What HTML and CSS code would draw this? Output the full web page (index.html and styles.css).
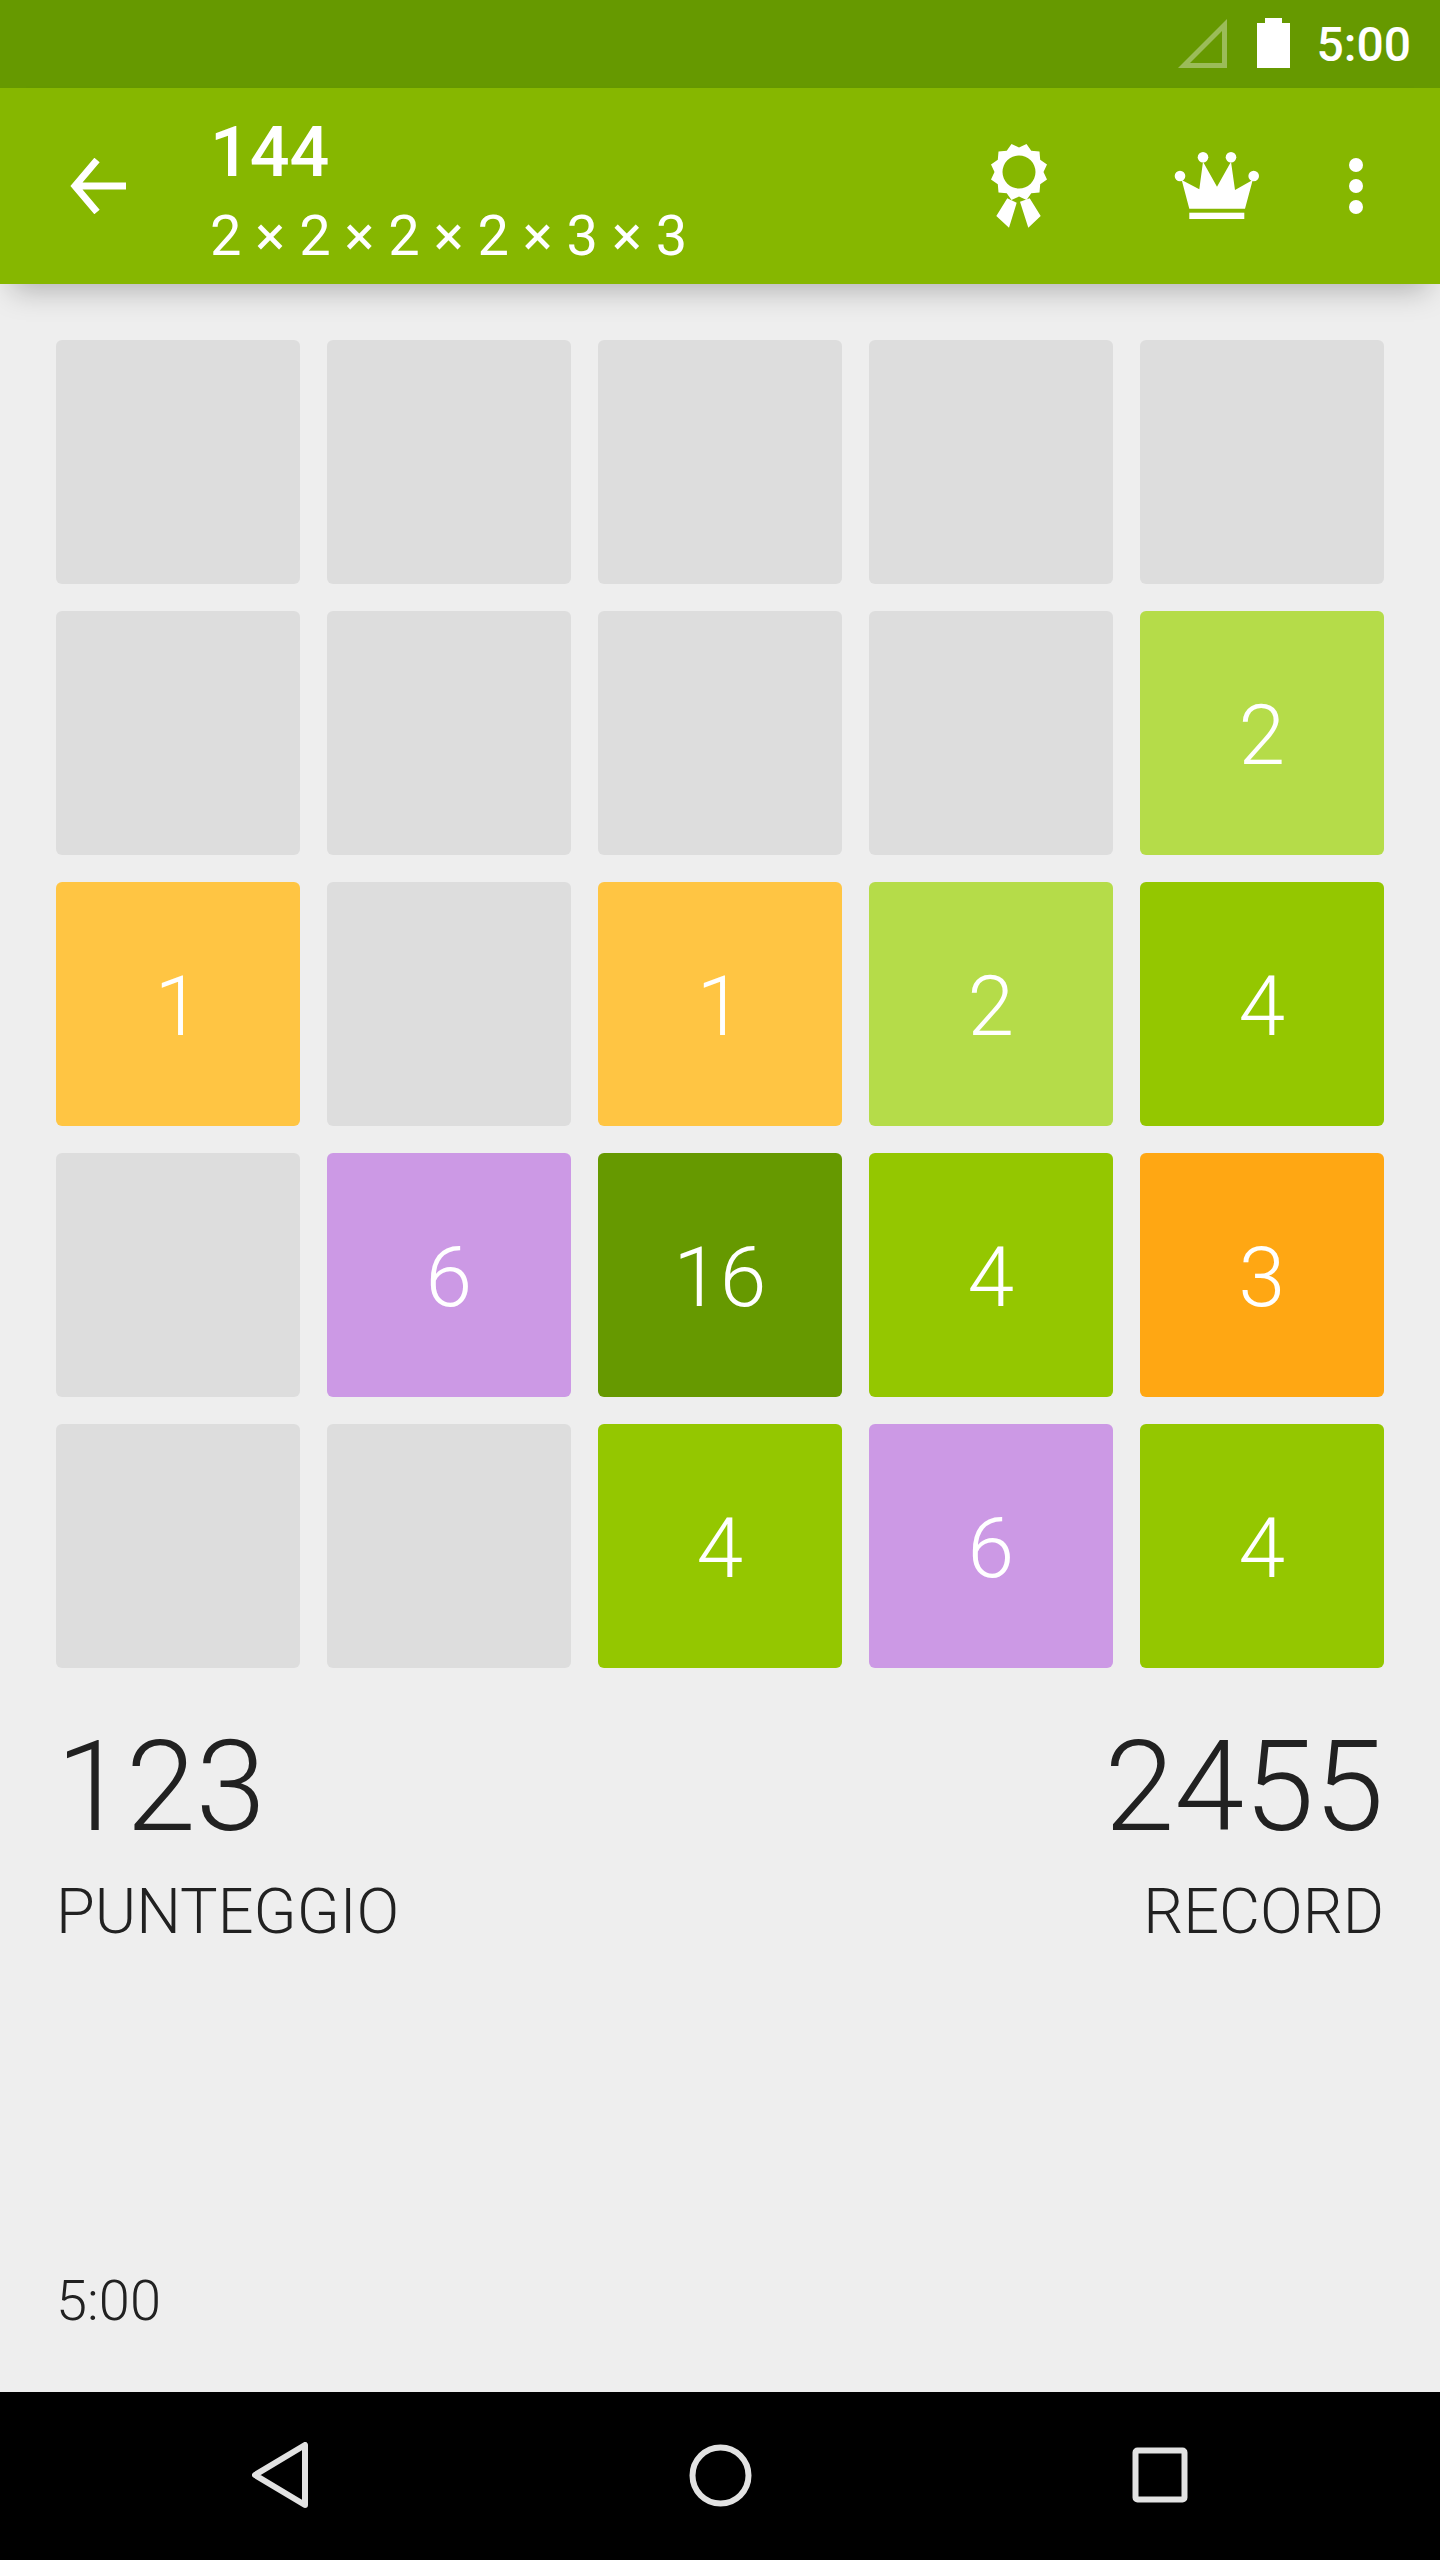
FILE: index.html
```html
<!DOCTYPE html>
<html lang="it">
<head>
    <meta charset="UTF-8">
    <meta name="viewport" content="width=device-width, initial-scale=1.0">
    <title>144</title>
    <link rel="stylesheet" href="styles.css">
</head>
<body>

<div class="status-bar">
    <svg class="signal" viewBox="0 0 49 49"><path fill-rule="evenodd" d="M49 0V49H0ZM44 12 12 44H44Z"/></svg>
    <svg class="battery" viewBox="0 0 33 50"><path d="M8 0H25V5H33V50H0V5H8Z"/></svg>
    <span class="clock">5:00</span>
</div>

<div class="app-bar">
    <svg class="back" viewBox="0 0 56 56"><path d="M56 28H5M27 2 5 28 27 54"/></svg>
    <div class="titles">
        <div class="title">144</div>
        <div class="subtitle">2 × 2 × 2 × 2 × 3 × 3</div>
    </div>
    <svg class="medal" viewBox="0 0 60 90">
        <path fill-rule="evenodd" transform="translate(30 30)" d="M24.5 0 28 7.5 21.2 12.25 20.5 20.5 12.25 21.2 7.5 28 0 24.5-7.5 28-12.25 21.2-20.5 20.5-21.2 12.25-28 7.5-24.5 0-28-7.5-21.2-12.25-20.5-20.5-12.25-21.2-7.5-28 0-24.5 7.5-28 12.25-21.2 20.5-20.5 21.2-12.25 28-7.5ZM16.5 0A16.5 16.5 0 1 0-16.5 0 16.5 16.5 0 1 0 16.5 0Z"/>
        <path d="M18.3 56.3 27.7 60.7 20 85.7 7.3 74ZM31 59.7 40.7 56.3 51.7 74 39.3 85.7Z"/>
    </svg>
    <svg class="crown" viewBox="0 0 92 72">
        <circle cx="9" cy="26" r="5.3"/><circle cx="32" cy="7.3" r="5.3"/><circle cx="60" cy="7.3" r="5.3"/><circle cx="82.7" cy="26" r="5.3"/>
        <path d="M10.7 30 18.3 58.7H74L81.7 30 64 40 60 11.7 46 36.7 32 11.7 28.3 39.3Z"/>
        <rect x="18.3" y="62.7" width="55" height="6.3"/>
    </svg>
    <div class="overflow"><i></i><i></i><i></i></div>
</div>

<div class="main">
    <div class="board">
        <div class="tile"></div>
        <div class="tile"></div>
        <div class="tile"></div>
        <div class="tile"></div>
        <div class="tile"></div>

        <div class="tile"></div>
        <div class="tile"></div>
        <div class="tile"></div>
        <div class="tile"></div>
        <div class="tile t2">2</div>

        <div class="tile t1">1</div>
        <div class="tile"></div>
        <div class="tile t1">1</div>
        <div class="tile t2">2</div>
        <div class="tile t4">4</div>

        <div class="tile"></div>
        <div class="tile t6">6</div>
        <div class="tile t16">16</div>
        <div class="tile t4">4</div>
        <div class="tile t3">3</div>

        <div class="tile"></div>
        <div class="tile"></div>
        <div class="tile t4">4</div>
        <div class="tile t6">6</div>
        <div class="tile t4">4</div>
    </div>

    <div class="scores">
        <div class="score">
            <div class="score-value">123</div>
            <div class="score-label">PUNTEGGIO</div>
        </div>
        <div class="score score-right">
            <div class="score-value">2455</div>
            <div class="score-label">RECORD</div>
        </div>
    </div>

    <div class="timer">5:00</div>
</div>

<div class="nav-bar">
    <svg class="nav-back" viewBox="0 0 56 66"><path d="M53 3V63L3 33Z"/></svg>
    <svg class="nav-home" viewBox="0 0 63 63"><circle cx="31.5" cy="31.5" r="28"/></svg>
    <svg class="nav-recent" viewBox="0 0 56 56"><rect x="3.5" y="3.5" width="49" height="49" rx="2"/></svg>
</div>

</body>
</html>
```

FILE: styles.css
```css
* { box-sizing: border-box; }
body { margin: 0; height: 2560px; display: flex; flex-direction: column; background: #eeeeee; font-family: Roboto, sans-serif; }

.status-bar { height: 88px; flex: none; display: flex; align-items: center; justify-content: flex-end; background: #669900; color: white; padding-right: 29px; }
.signal { width: 49px; height: 49px; margin-top: -1px; fill: white; opacity: 0.35; }
.battery { width: 33px; height: 50px; margin-left: 30px; margin-top: -2px; fill: white; }
.clock { font-size: 48px; margin-left: 27px; font-weight: 500; }

.app-bar { height: 196px; flex: none; display: flex; align-items: flex-start; background: #86b700; color: white; position: relative; box-shadow: 0 18px 28px -12px rgba(0, 0, 0, 0.26); }
.back { width: 56px; height: 56px; margin: 70px 0 0 70px; fill: none; stroke: white; stroke-width: 7; }
.titles { width: 779px; margin: 22px 0 0 84px; }
.title { font-size: 70px; line-height: 84px; font-weight: 500; }
.subtitle { font-size: 56px; line-height: 84px; font-weight: 400; }
.medal { width: 60px; height: 90px; margin-top: 54px; fill: white; }
.crown { width: 92px; height: 72px; margin: 62px 0 0 122px; fill: white; }
.overflow { margin: 70px 0 0 86px; display: flex; flex-direction: column; gap: 7px; }
.overflow i { display: block; width: 14px; height: 14px; border-radius: 50%; background: white; }

.main { flex: 1; display: flex; flex-direction: column; padding: 56px 56px 51px 56px; color: #212121; }
.board { display: grid; grid-template-columns: repeat(5, 243.5px); grid-auto-rows: 243.5px; gap: 27.5px; }
.tile { display: flex; align-items: center; justify-content: center; padding-top: 6px; background: #dddddd; border-radius: 6px; color: white; font-size: 84px; font-weight: 300; }
.t1 { background: #ffc543; }
.t2 { background: #b5dc49; }
.t3 { background: #ffa713; }
.t4 { background: #94c700; }
.t6 { background: #cc99e5; }
.t16 { background: #669900; }

.scores { display: flex; justify-content: space-between; margin-top: 44px; }
.score-right { text-align: right; }
.score-value { font-size: 126px; line-height: 150px; font-weight: 300; }
.score-label { font-size: 63px; line-height: 96px; margin-top: 2px; font-weight: 300; }
.timer { margin-top: auto; font-size: 56px; line-height: 80px; font-weight: 300; }

.nav-bar { height: 168px; flex: none; display: flex; align-items: center; background: black; padding-left: 252px; }
.nav-bar svg { fill: none; stroke: #e2e2e2; stroke-width: 6; stroke-linejoin: round; }
.nav-back { width: 56px; height: 66px; margin-top: -2px; }
.nav-home { width: 63px; height: 63px; margin: -2px 0 0 381px; stroke-width: 7; }
.nav-recent { width: 56px; height: 56px; margin: -2px 0 0 380px; }
```
